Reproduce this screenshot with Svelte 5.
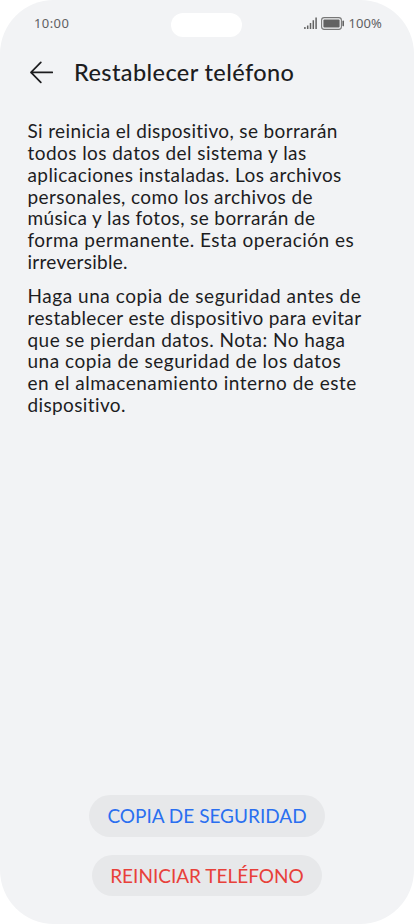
<script>
    const paragraphs = [
        [
            { text: "Si reinicia el dispositivo, se borrarán", spacing: 0.36 },
            { text: "todos los datos del sistema y las", spacing: 0.44 },
            { text: "aplicaciones instaladas. Los archivos", spacing: 0.42 },
            { text: "personales, como los archivos de", spacing: 0.42 },
            { text: "música y las fotos, se borrarán de", spacing: 0.38 },
            { text: "forma permanente. Esta operación es", spacing: 0.48 },
            { text: "irreversible.", spacing: 0.28 }
        ],
        [
            { text: "Haga una copia de seguridad antes de", spacing: 0.54 },
            { text: "restablecer este dispositivo para evitar", spacing: 0.37 },
            { text: "que se pierdan datos. Nota: No haga", spacing: 0.47 },
            { text: "una copia de seguridad de los datos", spacing: 0.52 },
            { text: "en el almacenamiento interno de este", spacing: 0.49 },
            { text: "dispositivo.", spacing: 0.38 }
        ]
    ];
</script>

<div class="screen">
    <div class="status">
        <span class="time">10:00</span>
        <span class="camera"></span>
        <div class="indicators">
            <svg class="signal" width="13" height="13" viewBox="0 0 13 13">
                <path d="M.9 10v2M3.7 8.5V12M6.5 6V12M9.3 3.3V12M12.1.5V12" />
            </svg>
            <svg class="battery" width="24" height="13" viewBox="0 0 24 13">
                <rect class="shell" x=".6" y=".6" width="19.8" height="11.8" rx="2.6" />
                <rect x="2.4" y="2.4" width="16.2" height="8.2" rx="1" />
                <rect x="21.4" y="3.6" width="1.6" height="5.8" rx=".8" />
            </svg>
            <span class="percent">100%</span>
        </div>
    </div>

    <header>
        <button class="back" aria-label="Atrás">
            <svg width="24" height="24" viewBox="0 0 24 24">
                <path d="M23.3 12.4H2M11.8 2.4L2 12.4l9.8 10" />
            </svg>
        </button>
        <h1>Restablecer teléfono</h1>
    </header>

    <main>
        {#each paragraphs as lines}
        <p>
            {#each lines as line}
            <span class="line" style="letter-spacing: {line.spacing}px">{line.text}</span>
            {/each}
        </p>
        {/each}
    </main>

    <footer>
        <button class="pill backup">COPIA DE SEGURIDAD</button>
        <button class="pill reset">REINICIAR TELÉFONO</button>
    </footer>
</div>

<style>
    :global(body) {
        margin: 0;
        background: #fff;
    }

    .screen {
        width: 414px;
        height: 924px;
        box-sizing: border-box;
        display: flex;
        flex-direction: column;
        overflow: hidden;
        border-radius: 54px;
        background: #f2f3f5;
        color: #1d1d1f;
        font-family: Lato, "Noto Sans", sans-serif;
    }

    .status {
        height: 24px;
        padding: 13px 32px 0 34px;
        display: grid;
        grid-template-columns: 137px 71px 1fr;
        align-items: center;
        color: #5f6062;
        font: 13px/24px "Noto Sans", sans-serif;
    }

    .time {
        height: 26px;
        margin-top: -2px;
        letter-spacing: .4px;
    }

    .camera {
        height: 24px;
        border-radius: 12px;
        background: #fff;
    }

    .indicators {
        height: 24px;
        margin-top: -3px;
        display: flex;
        align-items: center;
        justify-content: flex-end;
    }

    .signal {
        margin-right: 4px;
        fill: none;
        stroke: #626262;
        stroke-width: 1.5;
    }

    .battery {
        margin-right: 3px;
        fill: #626262;
    }

    .battery .shell {
        fill: none;
        stroke: #777;
        stroke-width: 1.1;
    }

    .percent {
        margin-top: -1px;
        letter-spacing: .1px;
    }

    header {
        height: 34px;
        margin-top: 18px;
        padding-left: 29px;
        display: flex;
        align-items: center;
    }

    button {
        border: 0;
        padding: 0;
        font-family: inherit;
        cursor: pointer;
    }

    .back {
        display: flex;
        background: none;
    }

    .back svg {
        fill: none;
        stroke: #1d1d1f;
        stroke-width: 1.7;
        stroke-linecap: round;
        stroke-linejoin: round;
    }

    h1 {
        margin: 0 0 0 21px;
        font-size: 23.5px;
        line-height: 34px;
        font-weight: 500;
        letter-spacing: .4px;
        white-space: nowrap;
    }

    main {
        margin-top: 31px;
        padding-left: 27.5px;
    }

    p {
        margin: 0 0 12px;
        font-size: 19px;
        line-height: 21.85px;
    }

    .line {
        display: block;
        white-space: nowrap;
    }

    footer {
        margin-top: auto;
        padding-bottom: 28px;
        display: flex;
        flex-direction: column;
        align-items: center;
        gap: 18px;
    }

    .pill {
        height: 41.5px;
        border-radius: 21px;
        background: #e7e8ea;
        font-size: 19px;
        white-space: nowrap;
    }

    .backup {
        width: 236px;
        color: #2a6ff0;
    }

    .reset {
        width: 230px;
        color: #e8403a;
    }
</style>
